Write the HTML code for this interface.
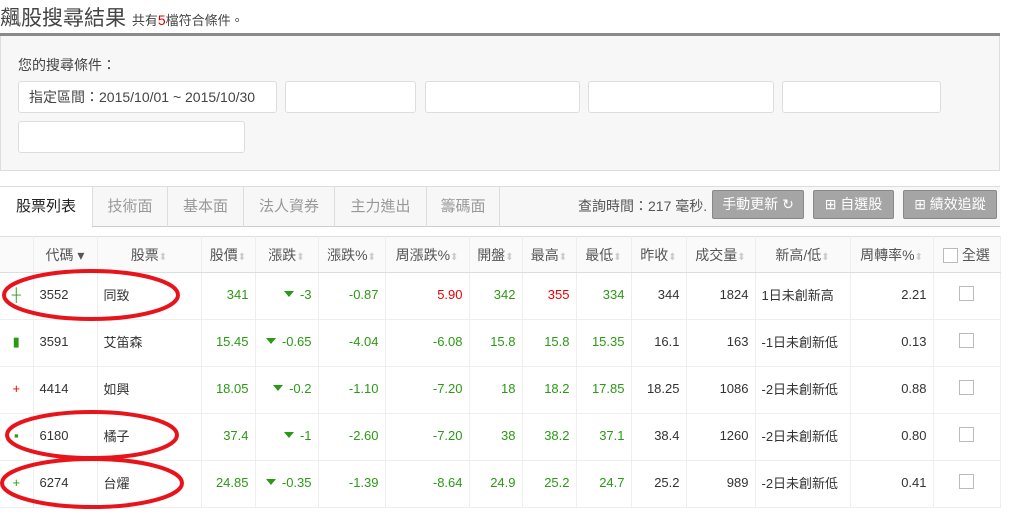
<!DOCTYPE html>
<html><head><meta charset="utf-8"><style>
*{margin:0;padding:0;box-sizing:border-box}
body{width:1015px;height:514px;overflow:hidden;background:#fff;font-family:"Liberation Sans","Noto Sans CJK TC",sans-serif;color:#333;position:relative}
.abs{position:absolute}
.title{left:0;top:2px;font-size:21px;color:#444}
.title small{font-size:13px;color:#444}
.title b{color:#d00;font-weight:normal;font-size:14px}
.line{left:0;top:33px;width:1000px;height:3px;background:#8a8a8a}
.panel{left:0;top:36px;width:1000px;height:135px;background:#f7f7f7;border:1px solid #ddd;border-top:none}
.lbl{left:18px;top:55px;font-size:14px;color:#444}
.box{background:#fff;border:1px solid #ddd;border-radius:3px;height:32px;font-size:14px;color:#444;line-height:30px;padding-left:10px}
.tabs{left:0;top:186px;width:1000px;height:41px;border-top:1px solid #ddd;border-bottom:1px solid #ccc;background:#f7f7f7}
.tab{position:absolute;top:0;height:40px;border-right:1px solid #ddd;font-size:15px;color:#999;text-align:center;line-height:40px}
.btn{position:absolute;top:190px;height:29px;background:#a5a5a5;border:1px solid #888;border-radius:2px;color:#fff;font-size:14px;line-height:27px;text-align:center}
table{position:absolute;left:0;top:236px;border-collapse:collapse;table-layout:fixed;width:1000px;font-size:13px}
th{height:36px;font-weight:normal;color:#555;border-top:1px solid #ddd;border-bottom:1px solid #ddd;border-right:1px solid #eee;background:#fafafa;white-space:nowrap;font-size:14px}
td{height:47px;border-bottom:1px solid #eee;border-right:1px solid #eee;padding:0 6px 3px;white-space:nowrap;color:#333}
.r{text-align:right}.g{color:#2a9a14}.red{color:#e00}
.s{color:#ccc;font-size:10px}
.tri{display:inline-block;width:0;height:0;border-left:5px solid transparent;border-right:5px solid transparent;border-top:6px solid #2a9a14;margin-right:6px;vertical-align:2px}
.cb{display:inline-block;width:15px;height:15px;border:1px solid #bbb;background:#fff}
</style></head><body>
<div class="abs title">飆股搜尋結果 <small>共有<b>5</b>檔符合條件。</small></div>
<div class="abs line"></div>
<div class="abs panel"></div>
<div class="abs lbl">您的搜尋條件：</div>
<div class="abs box" style="left:18px;top:81px;width:259px">指定區間：2015/10/01 ~ 2015/10/30</div>
<div class="abs box" style="left:285px;top:81px;width:131px"></div>
<div class="abs box" style="left:425px;top:81px;width:155px"></div>
<div class="abs box" style="left:588px;top:81px;width:186px"></div>
<div class="abs box" style="left:782px;top:81px;width:159px"></div>
<div class="abs box" style="left:18px;top:121px;width:227px"></div>
<div class="abs tabs">
<div class="tab" style="left:0;width:93px;background:#fff;color:#222;height:41px">股票列表</div>
<div class="tab" style="left:93px;width:75px">技術面</div>
<div class="tab" style="left:168px;width:76px">基本面</div>
<div class="tab" style="left:244px;width:91px">法人資券</div>
<div class="tab" style="left:335px;width:92px">主力進出</div>
<div class="tab" style="left:427px;width:73px">籌碼面</div>
</div>
<div class="abs" style="left:578px;top:196px;font-size:14px;color:#555">查詢時間：217 毫秒.</div>
<div class="btn" style="left:712px;width:92px">手動更新 ↻</div>
<div class="btn" style="left:813px;width:81px">⊞ 自選股</div>
<div class="btn" style="left:903px;width:94px">⊞ 績效追蹤</div>
<table>
<colgroup><col style="width:33px"><col style="width:64px"><col style="width:104px"><col style="width:54px"><col style="width:63px"><col style="width:67px"><col style="width:84px"><col style="width:53px"><col style="width:54px"><col style="width:55px"><col style="width:55px"><col style="width:69px"><col style="width:95px"><col style="width:83px"><col style="width:67px"></colgroup>
<tr><th></th><th>代碼 ▾</th><th>股票<span class="s">⬍</span></th><th>股價<span class="s">⬍</span></th><th>漲跌<span class="s">⬍</span></th><th>漲跌%<span class="s">⬍</span></th><th>周漲跌%<span class="s">⬍</span></th><th>開盤<span class="s">⬍</span></th><th>最高<span class="s">⬍</span></th><th>最低<span class="s">⬍</span></th><th>昨收<span class="s">⬍</span></th><th>成交量<span class="s">⬍</span></th><th>新高/低<span class="s">⬍</span></th><th>周轉率%<span class="s">⬍</span></th><th><span class="cb" style="vertical-align:-3px"></span> 全選</th></tr>
<tr><td class="g" style="text-align:center">┼</td><td>3552</td><td>同致</td><td class="r g">341</td><td class="r g"><span class="tri"></span>-3</td><td class="r g">-0.87</td><td class="r red">5.90</td><td class="r g">342</td><td class="r red">355</td><td class="r g">334</td><td class="r">344</td><td class="r">1824</td><td>1日未創新高</td><td class="r">2.21</td><td style="text-align:center"><span class="cb"></span></td></tr>
<tr><td class="g" style="text-align:center">▮</td><td>3591</td><td>艾笛森</td><td class="r g">15.45</td><td class="r g"><span class="tri"></span>-0.65</td><td class="r g">-4.04</td><td class="r g">-6.08</td><td class="r g">15.8</td><td class="r g">15.8</td><td class="r g">15.35</td><td class="r">16.1</td><td class="r">163</td><td>-1日未創新低</td><td class="r">0.13</td><td style="text-align:center"><span class="cb"></span></td></tr>
<tr><td class="red" style="text-align:center">+</td><td>4414</td><td>如興</td><td class="r g">18.05</td><td class="r g"><span class="tri"></span>-0.2</td><td class="r g">-1.10</td><td class="r g">-7.20</td><td class="r g">18</td><td class="r g">18.2</td><td class="r g">17.85</td><td class="r">18.25</td><td class="r">1086</td><td>-2日未創新低</td><td class="r">0.88</td><td style="text-align:center"><span class="cb"></span></td></tr>
<tr><td class="g" style="text-align:center">▪</td><td>6180</td><td>橘子</td><td class="r g">37.4</td><td class="r g"><span class="tri"></span>-1</td><td class="r g">-2.60</td><td class="r g">-7.20</td><td class="r g">38</td><td class="r g">38.2</td><td class="r g">37.1</td><td class="r">38.4</td><td class="r">1260</td><td>-2日未創新低</td><td class="r">0.80</td><td style="text-align:center"><span class="cb"></span></td></tr>
<tr><td class="g" style="text-align:center">+</td><td>6274</td><td>台燿</td><td class="r g">24.85</td><td class="r g"><span class="tri"></span>-0.35</td><td class="r g">-1.39</td><td class="r g">-8.64</td><td class="r g">24.9</td><td class="r g">25.2</td><td class="r g">24.7</td><td class="r">25.2</td><td class="r">989</td><td>-2日未創新低</td><td class="r">0.41</td><td style="text-align:center"><span class="cb"></span></td></tr>
</table>
<svg class="abs" style="left:0;top:0" width="1015" height="514">
<g fill="none" stroke="#e8141c" stroke-width="4">
<ellipse cx="91" cy="295" rx="87" ry="24"/>
<ellipse cx="92" cy="435" rx="85" ry="23"/>
<ellipse cx="92" cy="483" rx="90" ry="24"/>
</g></svg>
</body></html>
